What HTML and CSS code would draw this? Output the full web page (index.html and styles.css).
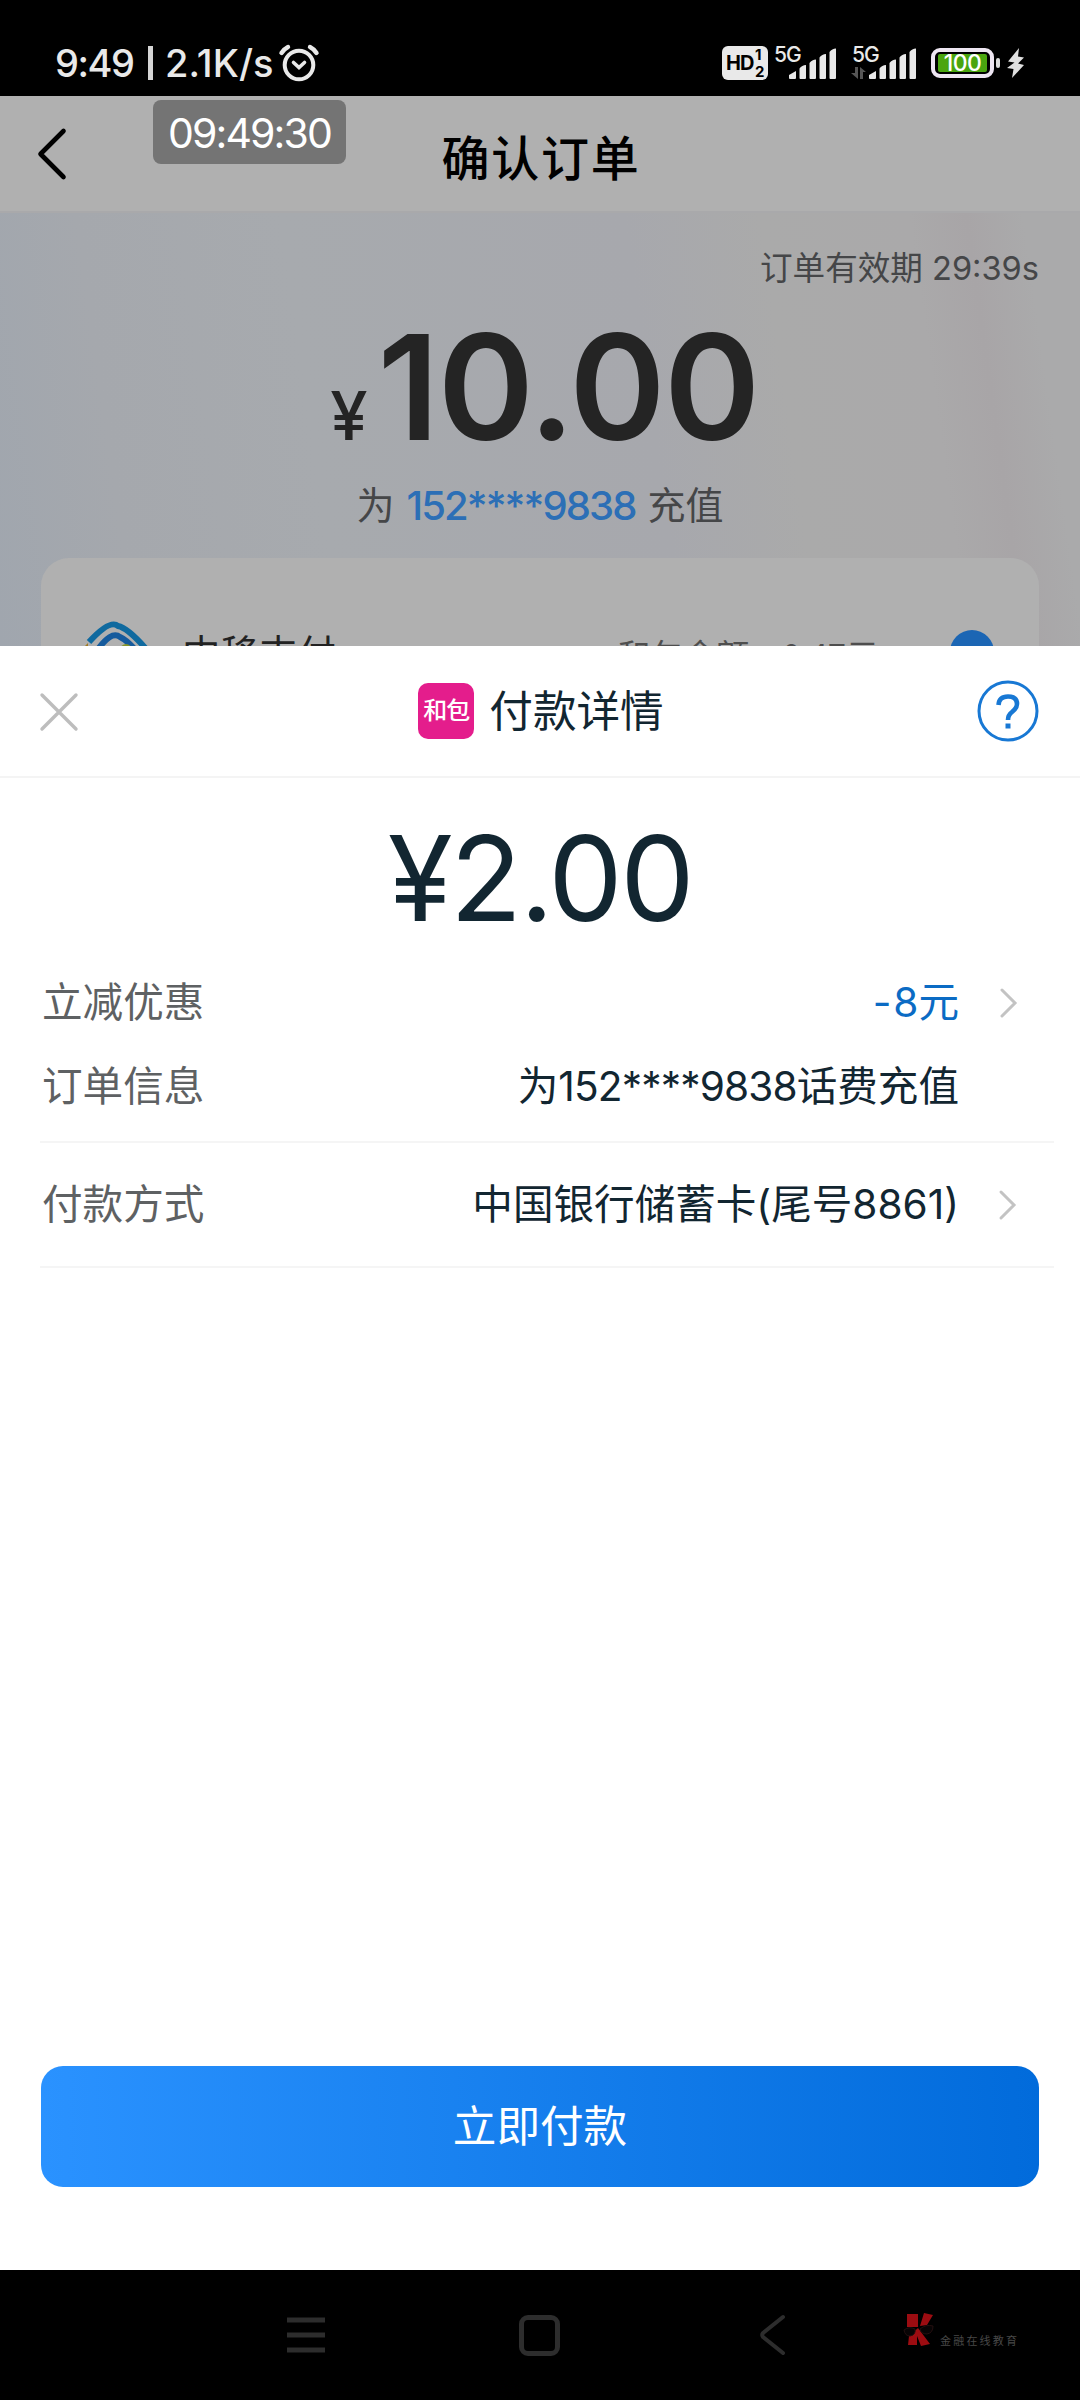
FILE: index.html
```html
<!DOCTYPE html>
<html lang="zh-CN">
<head>
<meta charset="utf-8">
<title>确认订单</title>
<link rel="stylesheet" href="styles.css">
</head>
<body>
<div class="phone">
  <header class="status">
    <div class="status-left">
      <span class="clock">9:49</span><span class="divider"></span><span class="speed">2.1K/s</span>
      <svg class="alarm" width="40" height="38" viewBox="0 0 40 38" fill="none" stroke="#e9e9e9" stroke-linecap="round">
        <circle cx="20" cy="21" r="14.3" stroke-width="4"/>
        <path d="M2.5 9Q5 5 9 3M37.500 9Q35 5 31 3" stroke-width="4.400"/>
        <path d="M14.500 18.500L20 23.500L25.500 18.500" stroke-width="3.600"/>
      </svg>
    </div>
    <div class="status-right">
      <div class="hd"><span class="hd-text">HD</span><span class="hd-nums"><span>1</span><span>2</span></span></div>
      <div class="signal">
        <span class="net">5G</span>
        <svg class="bars" width="48" height="32" viewBox="0 0 48 32" fill="#e9e9e9">
          <path d="M0 30V27L7 23V30Q7 31 6 31H1Q0 31 0 30ZM10.500 30V20.500Q13 17 17 17V30Q17 31 16 31H11.500Q10.500 31 10.500 30ZM20.500 30V15Q23 11.500 27 11.500V30Q27 31 26 31H21.500Q20.500 31 20.500 30ZM30.500 30V9.500Q33 6 37 6V30Q37 31 36 31H31.500Q30.500 31 30.500 30ZM40.500 30V4Q43 .5 47 .5V30Q47 31 46 31H41.500Q40.500 31 40.500 30Z"/>
        </svg>
      </div>
      <div class="signal second">
        <span class="net">5G</span>
        <svg class="arrows" width="16" height="12" viewBox="0 0 16 12" fill="#555"><path d="M4 0H7V12L0 6H4ZM9 12V0L15 5H12V12Z"/></svg>
        <svg class="bars" width="48" height="32" viewBox="0 0 48 32" fill="#e9e9e9">
          <path d="M0 30V27L7 23V30Q7 31 6 31H1Q0 31 0 30ZM10.500 30V20.500Q13 17 17 17V30Q17 31 16 31H11.500Q10.500 31 10.500 30ZM20.500 30V15Q23 11.500 27 11.500V30Q27 31 26 31H21.500Q20.500 31 20.500 30ZM30.500 30V9.500Q33 6 37 6V30Q37 31 36 31H31.500Q30.500 31 30.500 30ZM40.500 30V4Q43 .5 47 .5V30Q47 31 46 31H41.500Q40.500 31 40.500 30Z"/>
        </svg>
      </div>
      <div class="battery"><span>100</span></div><span class="nub"></span>
      <svg class="bolt" width="18" height="30" viewBox="0 0 18 30" fill="#e0e0e0"><path d="M12 0L1 13.500L7.500 14.500L0 20L6.500 21L5 30L17 17L11 15.500L17 9.500L11 8.500Z"/></svg>
    </div>
  </header>

  <div class="titlebar">
    <svg class="back" width="30" height="52" viewBox="0 0 30 52" fill="none" stroke="#000" stroke-width="4.600" stroke-linecap="round" stroke-linejoin="round"><path d="M26.500 3L3.500 26L26.500 49"/></svg>
    <h1>确认订单</h1>
    <div class="toast">09:49:30</div>
  </div>

  <main class="order">
    <p class="expire">订单有效期 29:39s</p>
    <p class="amount"><span class="yen">¥</span><span class="sum">10.00</span></p>
    <p class="target"><span>为</span><b>152****9838</b><span>充值</span></p>
    <section class="method-card">
      <svg class="cm-logo" width="64" height="64" viewBox="0 0 64 64" fill="none">
        <path d="M3 19Q24-4 32 3Q42 5 61 27" stroke="#106a9f" stroke-width="6"/>
        <path d="M10 29Q25 7 34 14Q43 18 57 36" stroke="#165b9d" stroke-width="6"/>
        <circle cx="40" cy="27" r="6" fill="#83942b"/>
        <path d="M2 20L-3 25H2Z" fill="#a07b25"/>
      </svg>
      <span class="method">中移支付</span>
      <span class="balance">和包余额：0.47元</span>
      <span class="radio"></span>
    </section>
  </main>

  <section class="sheet">
    <div class="sheet-head">
      <svg class="close" width="38" height="38" viewBox="0 0 38 38" stroke="#bdbdbd" stroke-width="3.400" stroke-linecap="round"><path d="M2 3L36 37M36 3L2 37"/></svg>
      <div class="brand"><span class="brand-logo">和包</span><h2>付款详情</h2></div>
      <svg class="help" width="62" height="62" viewBox="0 0 62 62" fill="none" stroke="#1878d4">
        <circle cx="31" cy="31" r="29" stroke-width="3"/>
        <path d="M21.500 25Q22 16.500 31 16.500Q40 16.500 40 24Q40 28 35 32Q31 35 31 40" stroke-width="4.600"/>
        <path d="M31 43.500V48.500" stroke-width="5"/>
      </svg>
    </div>
    <p class="pay">¥2.00</p>
    <div class="row discount"><span class="label">立减优惠</span><span class="value blue"><span class="minus">-</span>8元</span>
      <svg class="chev" width="20" height="32" viewBox="0 0 20 32"><path d="M3 3L16 16L3 29"/></svg></div>
    <div class="row info"><span class="label">订单信息</span><span class="value">为<span class="digits">152****9838</span>话费充值</span></div>
    <div class="row pay-by"><span class="label">付款方式</span><span class="value">中国银行储蓄卡(尾号8861)</span>
      <svg class="chev" width="20" height="32" viewBox="0 0 20 32"><path d="M2 3L15 16L2 29"/></svg></div>
    <button class="submit">立即付款</button>
  </section>

  <nav class="navbar">
    <svg class="menu" width="38" height="36" viewBox="0 0 38 36" stroke="#2d2d2d" stroke-width="5"><path d="M0 3H38M0 18H38M0 33H38"/></svg>
    <span class="home"></span>
    <svg class="nav-back" width="28" height="42" viewBox="0 0 28 42" fill="none" stroke="#2d2d2d" stroke-width="4" stroke-linecap="round" stroke-linejoin="round"><path d="M24 3L4 19Q2.500 21 4 23L24 39"/></svg>
    <div class="mark">
      <svg width="32" height="34" viewBox="0 0 32 34"><path d="M4 1H15V14H4ZM21 0L30 2L24 12L17 13ZM15 15L27 31L18 33L14 23V32H5L6 23Z" fill="#9c0c11"/><path d="M1 17Q6 13 12 16Q13 22 7 23Q2 23 1 17ZM17 16Q23 11 30 13Q30 20 24 21Q18 21 17 16Z" fill="#080405" stroke="#241010"/></svg>
      <span>金融在线教育</span>
    </div>
  </nav>
</div>
</body>
</html>
```
FILE: styles.css
```css
* { box-sizing: border-box; margin: 0; padding: 0; }
body { background: #000; font-family: Inter, "Noto Sans CJK SC", sans-serif; }
.phone { width: 1080px; height: 2400px; display: flex; flex-direction: column; overflow: hidden; }
svg { display: block; flex: none; overflow: visible; }
span, p, h1, h2, b { white-space: nowrap; }

.status { height: 96px; background: #000; color: #e9e9e9; display: flex; justify-content: space-between; padding: 0 55px 0 55px; }
.status-left { display: flex; align-items: center; padding-top: 30px; font-size: 38px; font-weight: 500; line-height: 40px; }
.clock { width: 93px; letter-spacing: -1.5px; }
.divider { width: 5px; height: 34px; background: #d5d5d5; }
.speed { width: 126px; padding-left: 12px; letter-spacing: .1px; }
.status-right { display: flex; align-items: flex-start; padding-top: 46px; }
.hd { width: 46px; height: 34px; border-radius: 6px; background: #e9e9e9; color: #000; display: flex; align-items: center; padding-left: 4px; font-weight: 700; }
.hd-text { font-size: 20px; width: 29px; letter-spacing: -1px; }
.hd-nums { display: flex; flex-direction: column; font-size: 15px; line-height: 17px; }
.signal { position: relative; width: 63px; height: 34px; margin-left: 6px; }
.signal.second { width: 66px; margin-left: 15px; }
.net { display: block; font-size: 21px; line-height: 17px; font-weight: 500; letter-spacing: -1px; }
.bars { position: absolute; right: 0; top: 2px; }
.second .bars { right: 1px; }
.arrows { position: absolute; left: -1px; top: 21px; }
.battery { width: 63px; height: 30px; margin: 2px 0 0 13px; border: 4px solid #eee6f2; border-radius: 9px; padding: 2px 3px; }
.battery span { display: block; height: 18px; border-radius: 2px; background: #4aa50f; color: #fff; text-align: center; font-size: 23px; line-height: 18px; font-weight: 500; letter-spacing: -.5px; }
.nub { width: 4px; height: 10px; margin: 12px 7px 0 2px; border-radius: 2px; background: #ddd; }
.bolt { margin-top: 2px; }

.titlebar { position: relative; height: 117px; background: #b0b0b0; border-bottom: 2px solid #a9a9ab; display: flex; align-items: center; justify-content: center; }
.back { position: absolute; left: 37px; top: 32px; }
.titlebar h1 { font-size: 48px; line-height: 60px; font-weight: 500; letter-spacing: 1.8px; padding: 10px 0 0 2px; }
.toast { position: absolute; left: 153px; top: 4px; width: 193px; height: 64px; border-radius: 8px; background: #747474; color: #fff; text-align: center; font-size: 41px; line-height: 66px; letter-spacing: -1.9px; }

.order { height: 433px; overflow: hidden; background: linear-gradient(82deg, #a0a6ae 0%, #a5a8ad 12%, #a7aaae 30%, #a7a8ad 60%, #aaaaaa 72%, #aaa9aa 85%, #a8a5a7 90%, #aaaaab 95%); padding: 0 41px; }
.expire { padding-top: 31px; text-align: right; color: #454648; font-size: 32.6px; line-height: 48px; }
.amount { display: flex; justify-content: center; align-items: baseline; height: 173px; padding: 15px 0 0 9px; color: #242424; line-height: 174px; }
.yen { font-size: 67px; font-weight: 500; line-height: 80px; margin-right: 11px; letter-spacing: -1px; }
.sum { font-size: 146px; font-weight: 580; line-height: 160px; letter-spacing: -1.6px; }
.target { display: flex; justify-content: center; gap: 12px; height: 54px; margin-top: 13px; font-size: 38px; line-height: 54px; color: #454648; }
.target b { margin-top: 1px; color: #2c6fb6; font-size: 40px; font-weight: 550; letter-spacing: -1.9px; }
.method-card { margin-top: 26px; height: 190px; border-radius: 28px; background: #b0b0b0; display: flex; align-items: flex-start; padding: 62px 45px 0 45px; }
.cm-logo { margin-top: 3px; }
.method { margin: 6px 0 0 32px; font-size: 38.5px; line-height: 56px; color: #222; }
.balance { margin: 9px 71px 0 auto; font-family: "Noto Sans CJK SC", sans-serif; font-size: 32.9px; line-height: 50px; color: #4e4e4e; }
.radio { width: 44px; height: 44px; margin-top: 10px; border-radius: 50%; background: #1c66b4; }

.sheet { height: 1624px; background: #fff; color: #122631; }
.sheet-head { height: 132px; border-bottom: 2px solid #f4f4f4; display: flex; align-items: center; justify-content: space-between; padding: 0 41px 0 40px; }
.brand { display: flex; align-items: center; gap: 15px; margin-left: 27px; }
.brand-logo { width: 56px; height: 56px; border-radius: 10px; background: #e41d8c; color: #fff; text-align: center; font-size: 24px; line-height: 56px; font-weight: 500; letter-spacing: -1px; }
.brand h2 { font-size: 43.6px; line-height: 60px; font-weight: 400; padding-top: 1px; }
.pay { height: 190px; padding-top: 30px; text-align: center; font-size: 118px; line-height: 140px; letter-spacing: -2.4px; }
.row { display: flex; align-items: center; margin-left: 40px; margin-right: 26px; font-size: 40.6px; line-height: 60px; }
.label { padding-left: 2px; color: #5e6163; }
.value { margin-left: auto; margin-right: 95px; }
.digits { letter-spacing: -.85px; }
.minus { letter-spacing: 2px; }
.blue { color: #0b6bc4; }
.discount { height: 70px; }
.discount .value, .pay-by .value { margin-right: 40px; }
.discount .chev, .pay-by .chev { margin-right: 35px; }
.chev { fill: none; stroke: #c3c3c3; stroke-width: 3; stroke-linecap: round; }
.info { height: 105px; padding-bottom: 6px; border-bottom: 2px solid #f5f5f5; }
.pay-by { height: 125px; border-bottom: 2px solid #f5f5f5; }
.submit { display: block; width: 998px; height: 121px; margin: 798px 0 0 41px; border: 0; border-radius: 22px; background: linear-gradient(90deg, #2a92ff, #016bdb); color: #fff; font-family: inherit; font-size: 43.6px; line-height: 121px; }

.navbar { height: 130px; background: #000; display: flex; align-items: center; padding-left: 287px; }
.home { width: 41px; height: 41px; margin-left: 194px; border: 5px solid #2d2d2d; border-radius: 9px; }
.nav-back { margin-left: 199px; }
.mark { display: flex; align-items: flex-end; margin: -10px 0 0 116px; gap: 5px; color: #484848; }
.mark span { font-size: 11px; line-height: 12px; letter-spacing: 2.2px; }
```
